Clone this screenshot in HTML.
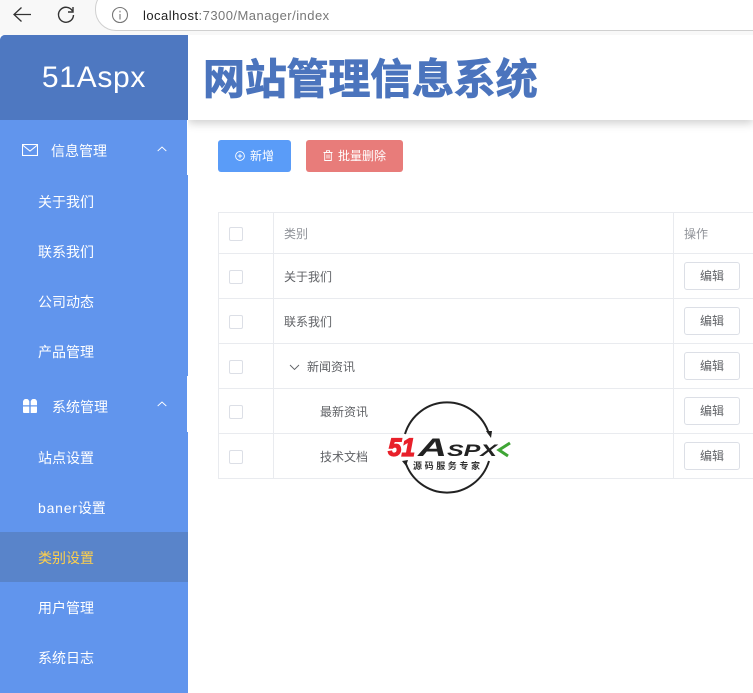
<!DOCTYPE html>
<html lang="zh">
<head>
<meta charset="utf-8">
<title>51Aspx</title>
<style>
html,body{margin:0;padding:0;width:753px;height:693px;overflow:hidden;background:#fff;font-family:"Liberation Sans","Noto Sans CJK SC",sans-serif;}
.a{position:absolute;white-space:nowrap;}
#chrome{left:0;top:0;width:753px;height:35px;background:#f8f8f8;}
#pill{left:95px;top:-12px;width:680px;height:41px;background:#fff;border:1px solid #d0d0d0;border-radius:21px;}
#side{left:0;top:35px;width:188px;height:658px;background:#6195ed;border-top-left-radius:5px;overflow:hidden;}
#logo{left:0;top:35px;width:188px;height:85px;background:#4e78c1;border-top-left-radius:5px;color:#fff;font-size:30px;line-height:85px;text-align:center;letter-spacing:.7px;}
#head{left:188px;top:35px;width:565px;height:85px;background:#fff;box-shadow:0 3px 9px rgba(0,0,0,.2);}
#title{left:203px;top:54px;font-size:42px;line-height:52px;font-weight:bold;color:#4b74bd;letter-spacing:-.2px;-webkit-text-stroke:.9px #4b74bd;}
.m{color:#fff;font-size:14px;line-height:20px;}
.btn{height:32px;border-radius:3px;color:#fff;font-size:12px;line-height:32px;}
.hl{background:#e9ebef;height:1px;left:218px;width:535px;}
.vl{background:#e9ebef;width:1px;top:212px;height:267px;}
.cb{left:229px;width:12px;height:12px;border:1px solid #dcdfe6;border-radius:2px;background:#fff;}
.t{font-size:12px;line-height:18px;color:#606266;}
.th{font-size:12px;line-height:18px;color:#909399;}
.ed{left:684px;width:54px;height:26px;border:1px solid #dcdfe6;border-radius:3px;background:#fff;color:#606266;font-size:12px;line-height:26px;text-align:center;}
</style>
</head>
<body>
<div class="a" id="head"></div>
<div class="a" id="chrome"></div>
<svg class="a" style="left:12px;top:5px" width="22" height="20" viewBox="0 0 22 20" fill="none" stroke="#333" stroke-width="1.3"><path d="M19 9.5H2M9.500 2.500L2 9.500l7.500 7"/></svg>
<svg class="a" style="left:56px;top:5px" width="20" height="20" viewBox="0 0 20 20" fill="none" stroke="#333" stroke-width="1.400"><path d="M16.500 6A7.500 7.500 0 1 0 17.500 10"/><path d="M17 2v5h-5"/></svg>
<div class="a" id="pill"></div>
<svg class="a" style="left:111px;top:6px" width="18" height="18" viewBox="0 0 18 18" fill="none" stroke="#777" stroke-width="1.100"><circle cx="9" cy="9" r="7.500"/><path d="M9 8v5.500M9 4.800v1.600"/></svg>
<div class="a" style="left:143px;top:7px;font-size:13px;line-height:17px;color:#777;letter-spacing:.47px"><span style="color:#222">localhost</span>:7300/Manager/index</div>

<div class="a" id="side"></div>
<div class="a" id="logo">51Aspx</div>
<div class="a" id="title">网站管理信息系统</div>

<div class="a" style="left:187px;top:120px;width:1px;height:55px;background:#fff"></div>
<div class="a" style="left:187px;top:376px;width:1px;height:56px;background:#fff"></div>

<svg class="a" style="left:22px;top:144px" width="16" height="12" viewBox="0 0 16 12" fill="none" stroke="#fff" stroke-width="1.100"><rect x=".5" y=".5" width="15" height="11"/><path d="M.5 1l7.500 6 7.500-6"/></svg>
<div class="a m" style="left:51px;top:141px">信息管理</div>
<svg class="a" style="left:157px;top:146px" width="10" height="6" viewBox="0 0 10 6" fill="none" stroke="#fff" stroke-width=".9"><path d="M.7 5L5 1l4.300 4"/></svg>
<div class="a m" style="left:38px;top:192px">关于我们</div>
<div class="a m" style="left:38px;top:242px">联系我们</div>
<div class="a m" style="left:38px;top:292px">公司动态</div>
<div class="a m" style="left:38px;top:342px">产品管理</div>

<svg class="a" style="left:23px;top:399px" width="14" height="14" viewBox="0 0 14 14" fill="#fff"><path d="M0 3a3 3 0 0 1 6.300 0v3.300H0zM7.700 3A3 3 0 0 1 14 3v3.300H7.700zM0 7.500h6.300V14H1a1 1 0 0 1-1-1zM7.700 7.500H14V13a1 1 0 0 1-1 1H7.700z"/></svg>
<div class="a m" style="left:52px;top:397px">系统管理</div>
<svg class="a" style="left:157px;top:401px" width="10" height="6" viewBox="0 0 10 6" fill="none" stroke="#fff" stroke-width=".9"><path d="M.7 5L5 1l4.300 4"/></svg>
<div class="a m" style="left:38px;top:448px">站点设置</div>
<div class="a m" style="left:38px;top:498px"><span style="letter-spacing:.8px">baner</span>设置</div>
<div class="a" style="left:0;top:532px;width:188px;height:50px;background:#5984ca"></div>
<div class="a m" style="left:38px;top:548px;color:#ffd04b">类别设置</div>
<div class="a m" style="left:38px;top:598px">用户管理</div>
<div class="a m" style="left:38px;top:648px">系统日志</div>

<div class="a btn" style="left:218px;top:140px;width:73px;background:#5a9cf8"></div>
<svg class="a" style="left:235px;top:151px" width="10" height="10" viewBox="0 0 10 10" fill="none" stroke="#fff" stroke-width=".9"><circle cx="5" cy="5" r="4.400"/><path d="M2.800 5h4.400M5 2.800v4.400"/></svg>
<div class="a btn" style="left:250px;top:140px">新增</div>
<div class="a btn" style="left:306px;top:140px;width:97px;background:#e87c7a"></div>
<svg class="a" style="left:323px;top:150px" width="10" height="11" viewBox="0 0 10 11" fill="none" stroke="#fff" stroke-width=".9"><path d="M.5 2.500h9M3.500 2.500V.7h3v1.800M1.700 2.500v8h6.600v-8M4 4.500v4M6 4.500v4"/></svg>
<div class="a btn" style="left:338px;top:140px">批量删除</div>

<div class="a hl" style="top:212px"></div>
<div class="a hl" style="top:253px"></div>
<div class="a hl" style="top:298px"></div>
<div class="a hl" style="top:343px"></div>
<div class="a hl" style="top:388px"></div>
<div class="a hl" style="top:433px"></div>
<div class="a hl" style="top:478px"></div>
<div class="a vl" style="left:218px"></div>
<div class="a vl" style="left:273px"></div>
<div class="a vl" style="left:673px"></div>

<div class="a cb" style="top:227px"></div>
<div class="a cb" style="top:270px"></div>
<div class="a cb" style="top:315px"></div>
<div class="a cb" style="top:360px"></div>
<div class="a cb" style="top:405px"></div>
<div class="a cb" style="top:450px"></div>

<div class="a th" style="left:284px;top:225px">类别</div>
<div class="a th" style="left:684px;top:225px">操作</div>
<div class="a t" style="left:284px;top:268px">关于我们</div>
<div class="a t" style="left:284px;top:313px">联系我们</div>
<svg class="a" style="left:289px;top:364px" width="11" height="7" viewBox="0 0 11 7" fill="none" stroke="#606266" stroke-width=".9"><path d="M1 1l4.500 4.500L10 1"/></svg>
<div class="a t" style="left:307px;top:358px">新闻资讯</div>
<div class="a t" style="left:320px;top:403px">最新资讯</div>
<div class="a t" style="left:320px;top:448px">技术文档</div>

<div class="a ed" style="top:262px">编辑</div>
<div class="a ed" style="top:307px">编辑</div>
<div class="a ed" style="top:352px">编辑</div>
<div class="a ed" style="top:397px">编辑</div>
<div class="a ed" style="top:442px">编辑</div>

<svg class="a" style="left:385px;top:400px" width="130" height="96" viewBox="385 400 130 96">
<path d="M405 434A44 45 0 0 1 489 434" fill="none" stroke="#222" stroke-width="2"/>
<path d="M486 431l6 0-1 7z" fill="#222"/>
<path d="M489 461A44 45 0 0 1 405 461" fill="none" stroke="#222" stroke-width="2"/>
<path d="M402 461l6-1-2 6z" fill="#222"/>
<text x="388" y="456" font-family="Liberation Sans" font-weight="bold" font-style="italic" font-size="25" fill="#e8202a" stroke="#e8202a" stroke-width="1.300" textLength="27" lengthAdjust="spacingAndGlyphs">51</text>
<text x="418" y="456" font-family="Liberation Sans" font-weight="bold" font-style="italic" font-size="25" fill="#222" textLength="29" lengthAdjust="spacingAndGlyphs">A</text>
<text x="447" y="456" font-family="Liberation Sans" font-weight="bold" font-style="italic" font-size="17" fill="#222" textLength="50" lengthAdjust="spacingAndGlyphs">SPX</text>
<path d="M510 443l-11 7 9 6" fill="none" stroke="#3fa535" stroke-width="3"/>
<text x="413" y="469" font-family="Liberation Sans,Noto Sans CJK SC,sans-serif" font-weight="bold" font-size="9" fill="#333" textLength="67">源码服务专家</text>
</svg>
</body>
</html>
